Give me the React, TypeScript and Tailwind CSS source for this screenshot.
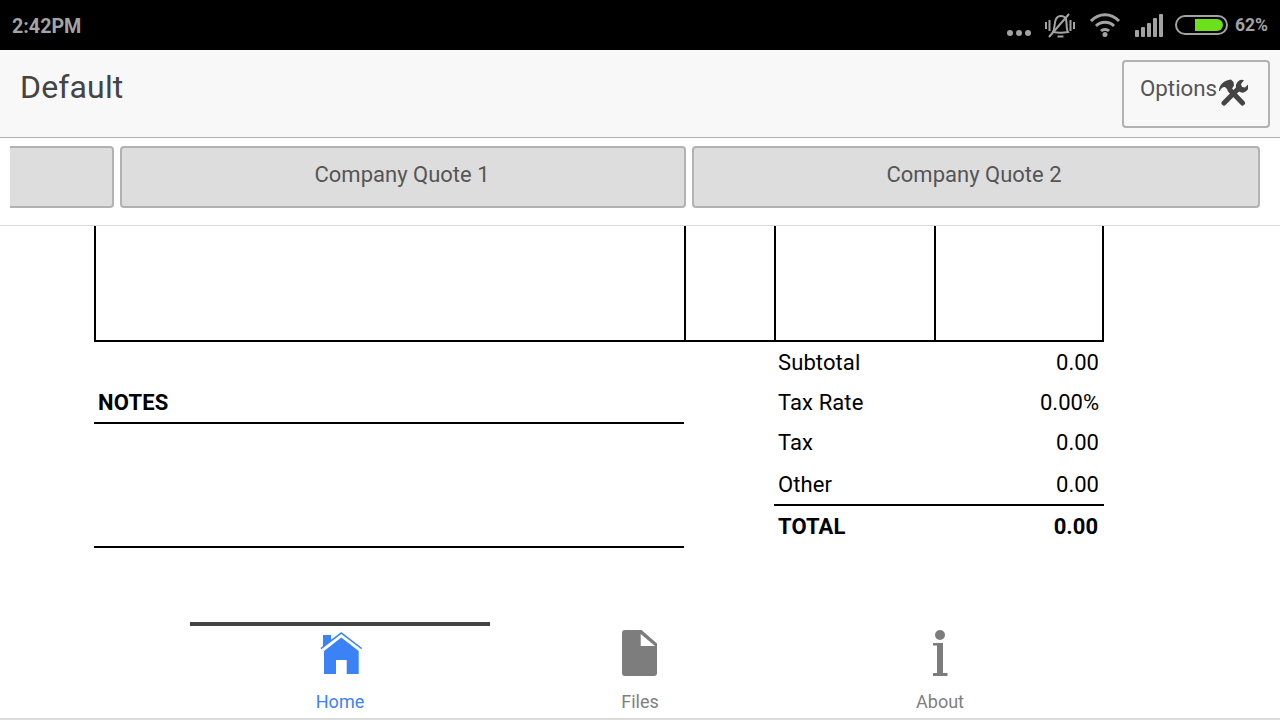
import React from "react";

const Row = ({ label, value }: { label: string; value: string }) => (
  <div className="flex items-center justify-between pl-1 pr-[5px] h-[40px]">
    <span>{label}</span>
    <span className="tracking-normal">{value}</span>
  </div>
);

const Tab = ({ label, active, children }: { label: string; active?: boolean; children: React.ReactNode }) => (
  <div className={`w-[300px] flex flex-col items-center border-t-4 ${active ? "border-[#444444] text-[#3b82f6]" : "border-transparent text-[#808080]"}`}>
    <div className="h-[64px] pt-[4px] flex items-start justify-center">{children}</div>
    <div className="text-[18px] leading-[24px]">{label}</div>
  </div>
);

export default function App() {
  return (
    <div className="w-[1280px] h-[720px] overflow-hidden bg-white flex flex-col font-['Roboto',sans-serif]">
      <div className="h-[50px] bg-black flex items-center justify-between pl-3 pr-3 text-[#a3a3a3] font-bold text-[19.700px]">
        <span className="pt-[4px]">2:42PM</span>
        <div className="flex items-center">
          <svg width="24" height="8" viewBox="0 0 24 8" className="mt-[15px] mr-[14px]" fill="#a3a3a3">
            <circle cx="3" cy="4" r="3" /><circle cx="12" cy="4" r="3" /><circle cx="21" cy="4" r="3" />
          </svg>
          <svg width="30" height="25" viewBox="0 0 30 25" className="mr-[14px]" fill="none" stroke="#a3a3a3" strokeWidth="2">
            <path d="M8 19 C10 16 9 10 11 6 C13 2 19 2 21 6 C22 10 21 16 23 19 C18 20 13 20 8 19 Z" />
            <path d="M12.500 23.500 H18.500" />
            <path d="M1 9 V16 M4.500 7 V18 M25.500 7 V18 M29 9 V16" />
            <path d="M24 1 L4 24" />
          </svg>
          <svg width="32" height="24" viewBox="0 0 32 24" className="mr-[14px]" fill="none" stroke="#a3a3a3" strokeWidth="3">
            <path d="M2 8 C10 -0.500 22 -0.500 30 8" />
            <path d="M7 13 C12 8 20 8 25 13" />
            <path d="M12 18 C14 16 18 16 20 18" />
            <circle cx="16" cy="21.500" r="2.500" fill="#a3a3a3" stroke="none" />
          </svg>
          <svg width="28" height="23" viewBox="0 0 28 23" className="mr-[12px]" fill="#a3a3a3">
            <rect x="0" y="16" width="4" height="7" rx="1" />
            <rect x="6" y="13" width="4" height="10" rx="1" />
            <rect x="12" y="9" width="4" height="14" rx="1" />
            <rect x="18" y="4" width="4" height="19" rx="1" />
            <rect x="24" y="0" width="4" height="23" rx="1" />
          </svg>
          <div className="w-[53px] h-[20px] rounded-full border-2 border-[#a3a3a3] flex justify-end items-center pr-[3px] mr-[7px]">
            <div className="w-[28px] h-[12px] bg-[#6be01b] rounded-r-[6px]"></div>
          </div>
          <span className="text-[17.500px]">62%</span>
        </div>
      </div>

      <div className="h-[88px] bg-[#f8f8f8] border-b border-[#b2b2b2] flex items-start justify-between pl-5 pr-[10px] pt-[10px] text-[#444444]">
        <div className="text-[32px] leading-[54px] tracking-[0.15px]">Default</div>
        <div className="w-[148px] h-[68px] border-2 border-[#b2b2b2] rounded-[4px] flex items-center pl-[16px] gap-[1px] text-[22.300px] text-[#555555]">
          <span className="-mt-[10px]">Options</span>
          <svg width="30" height="28" viewBox="0 0 30 28" fill="#444444" className="-mt-[5px]">
            <path d="M6 25 L21 10" stroke="#444444" strokeWidth="5" strokeLinecap="round" />
            <path d="M26 2.300 L23 6 L24 9 L27 9.500 L30 6.500 A6 6 0 0 1 21 13.500 L18.500 10.500 A6 6 0 0 1 26 2.300 Z" />
            <path d="M24.500 25 L12 12" stroke="#444444" strokeWidth="5" strokeLinecap="round" />
            <path d="M1 13 C1 7 6 2 13 1.500 L15.500 4 L16 7.500 L12 14 L7 9 C4 9 2.500 11 2 13 Z" />
          </svg>
        </div>
      </div>

      <div className="h-[88px] border-b border-[#dddddd] pl-[10px] pr-5 pt-2 flex gap-[6px] text-[22px] text-[#555555]">
        <div className="w-[104px] h-[62px] bg-[#dddddd] border-2 border-l-0 border-[#b2b2b2] rounded-r-[4px]"></div>
        <div className="w-[566px] h-[62px] pb-[6px] pr-[2px] bg-[#dddddd] border-2 border-[#b2b2b2] rounded-[4px] flex items-center justify-center">Company Quote 1</div>
        <div className="w-[568px] h-[62px] pb-[6px] pr-[4px] bg-[#dddddd] border-2 border-[#b2b2b2] rounded-[4px] flex items-center justify-center">Company Quote 2</div>
      </div>

      <div className="flex-1 flex flex-col">
        <div className="ml-[94px] w-[1010px] h-[116px] border-2 border-t-0 border-black flex">
          <div className="w-[590px] border-r-2 border-black"></div>
          <div className="w-[90px] border-r-2 border-black"></div>
          <div className="w-[160px] border-r-2 border-black"></div>
        </div>
        <div className="ml-[94px] w-[1010px] h-[280px] flex text-black text-[22px] tracking-[0.1px]">
          <div className="w-[590px] pt-[40px]">
            <div className="h-[42px] border-b-2 border-black flex items-center pl-1 font-bold tracking-[0.2px]">NOTES</div>
            <div className="h-[124px] border-b-2 border-black"></div>
          </div>
          <div className="ml-[90px] w-[330px]">
            <Row label="Subtotal" value="0.00" />
            <Row label="Tax Rate" value="0.00%" />
            <Row label="Tax" value="0.00" />
            <div className="h-[44px] border-b-2 border-black flex items-center justify-between pl-1 pr-[5px] pt-[2px]">
              <span>Other</span><span className="tracking-normal">0.00</span>
            </div>
            <div className="flex items-center justify-between pl-1 pr-[6px] h-[40px] font-bold">
              <span>TOTAL</span><span className="tracking-normal">0.00</span>
            </div>
          </div>
        </div>
      </div>

      <div className="h-[98px] flex justify-center bg-white border-b-2 border-[#dddddd]">
        <Tab label="Home" active>
          <svg width="42" height="42" viewBox="0 0 42 42" fill="#3b82f6" className="mt-[2px] ml-[2px]">
            <path d="M21.300 0 L42 16 L41.300 17.200 L21.300 2 L1.300 17.200 L0.500 16 L3 14 V3 H11 V7.800 Z" />
            <path d="M21.300 5.500 L38.700 19 V42 H26.700 V28 H16 V42 H4 V19 Z" />
          </svg>
        </Tab>
        <Tab label="Files">
          <svg width="35" height="46" viewBox="0 0 35 46" fill="#7d7d7d" className="mr-[1px]">
            <path fillRule="evenodd" d="M3 0 H19.500 L35 13.500 V43 a3 3 0 0 1 -3 3 H3 a3 3 0 0 1 -3 -3 V3 a3 3 0 0 1 3 -3 Z M18.700 4 V16 H33 Z" />
          </svg>
        </Tab>
        <Tab label="About">
          <svg width="15" height="46" viewBox="0 0 15 46" fill="#7d7d7d" className="ml-[1px]">
            <circle cx="7" cy="5" r="5" />
            <path d="M0 13 H10 V43 H14.500 V46 H0 V43 H4 V15.500 H0 Z" />
          </svg>
        </Tab>
      </div>
    </div>
  );
}
